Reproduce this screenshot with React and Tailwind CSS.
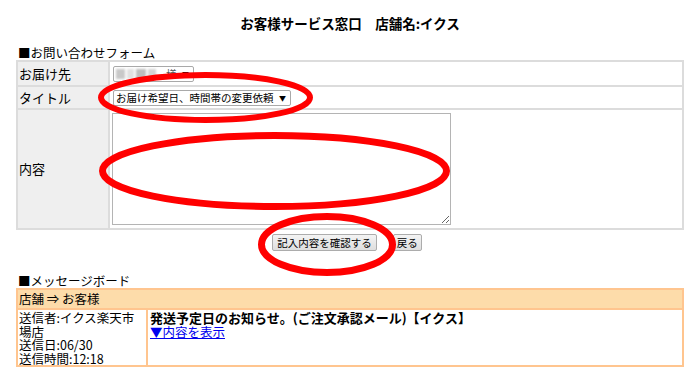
import React from "react";

function FakeSelect({ className = "", children }) {
  return (
    <div
      className={
        "flex h-[16px] items-center rounded-[2px] border border-[#a9a9a9] bg-white pl-[2px] pr-[4px] text-[10.5px] leading-[14px] text-black " +
        className
      }
    >
      {children}
    </div>
  );
}

export default function App() {
  return (
    <div className="relative h-[389px] w-[700px] overflow-hidden bg-white font-['Noto_Sans_CJK_JP',sans-serif] text-black">
      <div className="flex flex-col px-[16px]">
        <div className="pt-[14px] text-center text-[13.5px] font-bold leading-[18px]">
          お客様サービス窓口　店舗名:イクス
        </div>

        <div className="mt-[13px] pl-[2px] text-[12.5px] leading-[15px]">■お問い合わせフォーム</div>

        {/* form table */}
        <div className="flex flex-col border border-[#dcdcdc] text-[13px] leading-[16px]">
          <div className="flex h-[25px]">
            <div className="flex w-[92px] items-center border border-[#dcdcdc] bg-[#efefef] pl-[1px]">お届け先</div>
            <div className="flex flex-1 items-center border border-[#dcdcdc] pl-[3px]">
              <FakeSelect className="w-[81px]">
                <div className="flex items-center gap-[2px] blur-[1.2px]">
                  <span className="block h-[10px] w-[9px] bg-[#c8c8c8]" />
                  <span className="block h-[10px] w-[7px] bg-[#e0e0e0]" />
                  <span className="block h-[10px] w-[10px] bg-[#bdbdbd]" />
                  <span className="block h-[10px] w-[8px] bg-[#d4d4d4]" />
                </div>
                <span className="ml-[10px] text-[#555]">様</span>
                <span className="ml-auto text-[7px]">▼</span>
              </FakeSelect>
            </div>
          </div>
          <div className="flex h-[23px]">
            <div className="flex w-[92px] items-center border border-[#dcdcdc] bg-[#efefef] pl-[1px]">タイトル</div>
            <div className="flex flex-1 items-center border border-[#dcdcdc] pl-[3px]">
              <FakeSelect className="w-[178px]">
                <span>お届け希望日、時間帯の変更依頼</span>
                <span className="ml-auto text-[7px]">▼</span>
              </FakeSelect>
            </div>
          </div>
          <div className="flex h-[120px]">
            <div className="flex w-[92px] items-center border border-[#dcdcdc] bg-[#efefef] pl-[1px]">内容</div>
            <div className="flex flex-1 items-center border border-[#dcdcdc] pl-[2px]">
              <textarea className="block h-[112px] w-[339px] resize border border-[#b4b4b4] bg-white outline-none" />
            </div>
          </div>
        </div>

        <div className="mt-[4px] flex justify-center gap-[16px] pr-[6px]">
          <button className="h-[17px] rounded-[2px] border border-[#acacac] bg-gradient-to-b from-[#f4f4f4] to-[#dedede] px-[4px] text-[10.5px] leading-[14px]">
            記入内容を確認する
          </button>
          <button className="h-[17px] rounded-[2px] border border-[#acacac] bg-gradient-to-b from-[#f4f4f4] to-[#dedede] px-[3px] text-[10.5px] leading-[14px]">
            戻る
          </button>
        </div>

        <div className="mt-[22px] pl-[2px] text-[12.5px] leading-[15px]">■メッセージボード</div>

        {/* message board */}
        <div className="flex flex-col border border-[#ffc58f] text-[12.5px] leading-[13.5px]">
          <div className="flex h-[20px] items-center border border-[#ffc58f] bg-[#fddcaa] pl-[1px]">店舗 ⇒ お客様</div>
          <div className="flex h-[57px]">
            <div className="w-[130px] border border-[#ffc58f] pl-[1px] pt-[1px]">
              <div>送信者:イクス楽天市場店</div>
              <div>送信日:06/30</div>
              <div>送信時間:12:18</div>
            </div>
            <div className="flex-1 border border-[#ffc58f] pl-[2px] pt-[1px]">
              <div className="text-[13px] font-bold">発送予定日のお知らせ。(ご注文承認メール)【イクス】</div>
              <a href="#" className="text-[#0000ee] underline">▼内容を表示</a>
            </div>
          </div>
        </div>
      </div>

      {/* red annotation ellipses */}
      <svg className="pointer-events-none absolute left-0 top-0" width="700" height="389" viewBox="0 0 700 389">
        <ellipse cx="205.5" cy="97.5" rx="104.5" ry="22.5" fill="none" stroke="#ff0000" strokeWidth="6" />
        <ellipse cx="274.5" cy="171" rx="172" ry="35.5" fill="none" stroke="#ff0000" strokeWidth="7" />
        <ellipse cx="327" cy="244.5" rx="65.5" ry="28" fill="none" stroke="#ff0000" strokeWidth="7" />
      </svg>
    </div>
  );
}
